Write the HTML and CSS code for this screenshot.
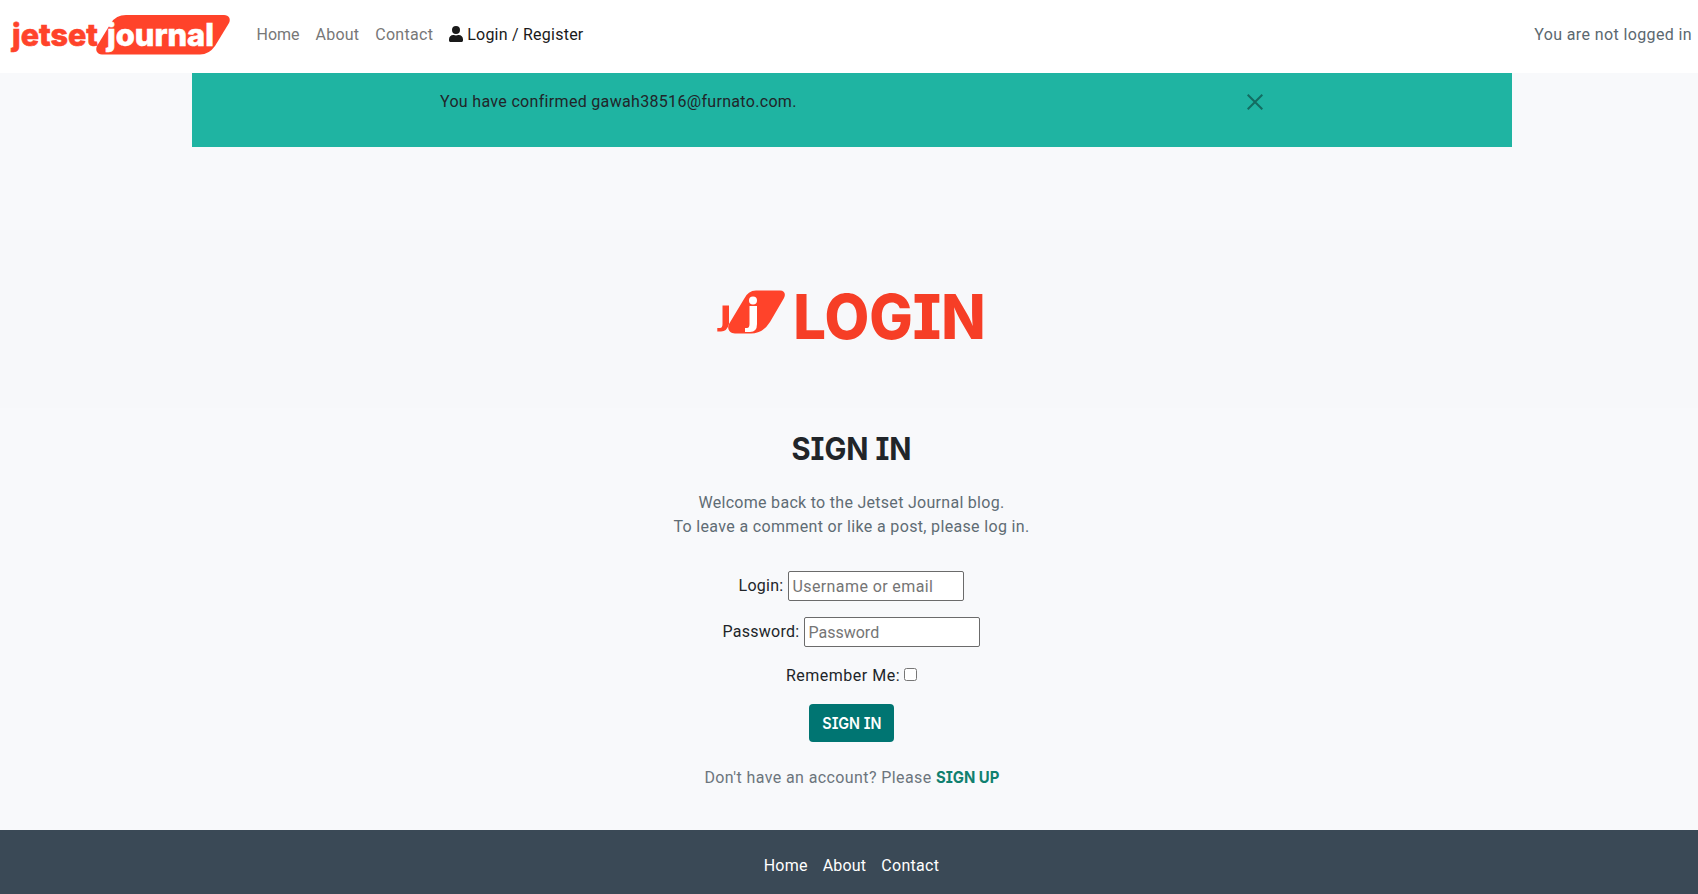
FILE: index.html
```html
<!DOCTYPE html>
<html lang="en">
<head>
<meta charset="utf-8">
<title>Jetset Journal - Sign In</title>
<link rel="stylesheet" href="styles.css">
</head>
<body>
<header class="navbar">
  <a class="brand" href="#">
    <svg width="221" height="42" viewBox="0 0 221 42" role="img" aria-label="jetset journal">
      <path class="brand-shape" d="M116 1H214C219 1 221 5 219 9L205 32Q199 40.500 190 40.500H92C87 40.500 85 36 87 32L101 9Q106 1 116 1Z"/>
      <text class="brand-text brand-red" x="2" y="32" textLength="86" lengthAdjust="spacingAndGlyphs">jetset</text>
      <text class="brand-text brand-white" x="97" y="32" textLength="107" lengthAdjust="spacingAndGlyphs">journal</text>
    </svg>
  </a>
  <nav class="nav-links">
    <a class="n-home" href="#">Home</a>
    <a class="n-about" href="#">About</a>
    <a class="n-contact" href="#">Contact</a>
    <a class="active" href="#"><svg class="user-icon" width="14" height="16" viewBox="0 0 448 512"><path d="M224 256A128 128 0 1 0 224 0a128 128 0 1 0 0 256zM313.600 288h-16.700c-22.200 10.200-46.900 16-72.900 16s-50.600-5.800-72.900-16h-16.700C60.200 288 0 348.200 0 422.400V464c0 26.500 21.500 48 48 48h352c26.500 0 48-21.500 48-48v-41.600c0-74.200-60.200-134.400-134.400-134.400z"/></svg><span>Login / Register</span></a>
  </nav>
  <p class="status">You are not logged in</p>
</header>
<main class="page">
  <div class="alert">
    <span class="alert-text">You have confirmed gawah38516@furnato.com.</span>
    <svg class="close" width="16" height="16" viewBox="0 0 16 16"><path d="M.7 .7L15.300 15.300M15.300 .7L.7 15.300"/></svg>
  </div>
  <section class="masthead">
    <svg class="emblem" width="69" height="44" viewBox="0 0 69 44">
      <path class="brand-shape" d="M39 .5H63C67.500 .5 69 4 67 8L53 32Q46 43.500 34 43.500H18C13 43.500 9.500 39 12 34L27 9Q31 .5 39 .5Z"/>
      <path class="small-j" d="M5.500 15.500H12V34Q10 41.500 4 41.500H.3V38H3Q5.500 38 5.500 34Z"/>
      <circle class="light" cx="36" cy="10.500" r="4"/>
      <path class="light" d="M32.500 16H40V34Q40 42 33 42H28V38H30Q32.500 38 32.500 34Z"/>
    </svg>
    <h1>LOGIN</h1>
  </section>
  <section class="signin">
    <h2>SIGN IN</h2>
    <p class="intro"><span class="line-one">Welcome back to the Jetset Journal blog.</span><br><span class="line-two">To leave a comment or like a post, please log in.</span></p>
    <form>
      <p class="field"><label for="login">Login:</label><input id="login" type="text" placeholder="Username or email"></p>
      <p class="field"><label for="password">Password:</label><input id="password" type="password" placeholder="Password"></p>
      <p class="remember"><label for="remember">Remember Me:</label><input id="remember" type="checkbox"></p>
      <button type="button"><span>SIGN IN</span></button>
    </form>
    <p class="signup"><span>Don't have an account? Please</span> <a href="#">SIGN UP</a></p>
  </section>
</main>
<footer class="footer">
  <a class="n-home" href="#">Home</a>
  <a class="n-about" href="#">About</a>
  <a class="n-contact" href="#">Contact</a>
</footer>
</body>
</html>
```
FILE: styles.css
```css
* { box-sizing: border-box; }
body {
  margin: 0;
  height: 894px;
  overflow: hidden;
  display: flex;
  flex-direction: column;
  background: #f8f9fb;
  color: #212529;
  font: 400 16px/24px Roboto, sans-serif;
}
a { color: inherit; text-decoration: none; }
p, h1, h2 { margin: 0; }

.navbar {
  display: flex;
  align-items: flex-start;
  height: 73px;
  padding: 14px 6px 0 10px;
  background: #fff;
}
.brand { display: block; height: 42px; }
.brand-shape, .brand-red, .small-j { fill: #ff432a; }
.brand-white, .light { fill: #fff; }
.brand-text { font: 800 31px Inter, sans-serif; }
.brand-red { stroke: #ff432a; stroke-width: .6; }
.brand-white { stroke: #fff; stroke-width: .6; }
.nav-links { display: flex; gap: 16px; margin: 9px 0 0 25.500px; color: #777; }
.n-about { letter-spacing: .2px; }
.n-contact { letter-spacing: .3px; }
.nav-links .active { display: flex; gap: 4px; color: #1a1a1a; letter-spacing: .23px; }
.user-icon { margin-top: 3px; fill: #1a1a1a; }
.status { margin: 9px 0 0 auto; color: #5b6870; letter-spacing: .38px; }

.page { flex: 0 0 757px; padding-left: 6px; background: #f8f9fb; }
.alert {
  display: flex;
  justify-content: space-between;
  width: 1320px;
  height: 74px;
  margin: 0 auto;
  padding: 17px 249px 0 248px;
  background: #1fb4a2;
}
.alert-text { letter-spacing: .32px; }
.close { margin-top: 4px; fill: none; stroke: #136c61; stroke-width: 2; }
.masthead {
  display: flex;
  justify-content: center;
  gap: 11px;
  height: 178px;
  margin: 83px 0 0 -6px;
  padding: 60px 0 0 5px;
  background: #f7f8fa;
}
h1 {
  width: 190px;
  color: #f63e26;
  font: 800 62px/54px Inter, sans-serif;
  font-feature-settings: "cv08";
  text-indent: -4px;
  white-space: nowrap;
  transform: scaleX(.935);
  transform-origin: left;
}
h2 {
  font: 700 31px/42px Inter, sans-serif;
  font-feature-settings: "cv08";
  transform: scaleX(.94);
}
.signin { padding: 20px 1px 0 0; text-align: center; }
.intro { margin-top: 21px; color: #5f6c74; }
.line-one { letter-spacing: .29px; }
.line-two { letter-spacing: .34px; }
form { margin-top: 32px; }
.field { display: flex; justify-content: center; align-items: center; gap: 5px; height: 30px; margin-bottom: 16px; }
.field label { letter-spacing: .27px; }
.field input {
  width: 176px;
  height: 30px;
  padding: 1px 3px;
  border: 1px solid #6b6b6b;
  border-radius: 2px;
  background: #fff;
  font: inherit;
}
.field input::placeholder { color: #757575; }
#login { letter-spacing: .4px; }
.remember { display: flex; justify-content: center; gap: 4px; height: 24px; margin-top: 17px; letter-spacing: .5px; }
.remember input { width: 13px; height: 13px; margin: 4px 0 0; }
button {
  display: block;
  width: 85px;
  height: 38px;
  margin: 16px auto 0;
  padding: 0;
  border: 0;
  border-radius: 4px;
  background: #007572;
  color: #fff;
  font: 600 16px/24px Inter, sans-serif;
  font-feature-settings: "cv08";
}
button span { display: inline-block; transform: scaleX(.9); }
.signup { margin-top: 23px; color: #6c757d; }
.signup span { letter-spacing: .4px; }
.signup a {
  display: inline-block;
  width: 63px;
  color: #10806f;
  font: 700 16px/24px Inter, sans-serif;
  font-feature-settings: "cv08";
  white-space: nowrap;
  transform: scaleX(.93);
  transform-origin: left;
}
.footer {
  display: flex;
  justify-content: center;
  gap: 15px;
  flex: 1;
  padding: 24px 0 0 5px;
  background: #3a4956;
  color: #fff;
  letter-spacing: .25px;
}
```
